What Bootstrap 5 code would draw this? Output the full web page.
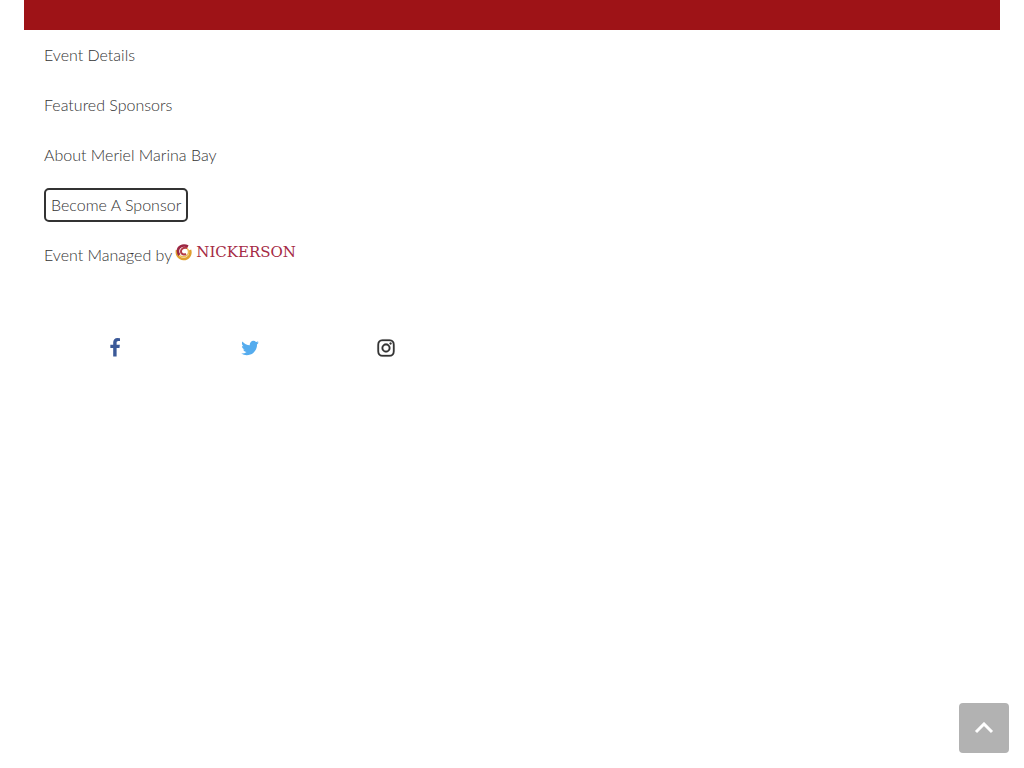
<!DOCTYPE html>
<html lang="en">
<head>
<meta charset="utf-8">
<meta name="viewport" content="width=device-width, initial-scale=1">
<title>Meriel Marina Bay Event</title>
<link href="https://cdn.jsdelivr.net/npm/bootstrap@5.3.0/dist/css/bootstrap.min.css" rel="stylesheet">
<style>
  body { font: 300 16px/20px Lato, sans-serif; color: #333; background: #fff; }
  .page-wrap { padding: 0 24px; }
  .banner { height: 30px; background: #9e1317; }
  .menu-row { height: 50px; padding: 0 20px; }
  .menu-row a, .social a { color: inherit; text-decoration: none; }
  .menu-row .sponsor-btn { border: 2px solid #333; border-radius: 5px; padding: 5px; }
  .brand-logo { gap: 4px; margin: 0 0 6px 3px; }
  .brand-logo span { font: 400 15px/18px "DejaVu Serif", serif; color: #a52a44; }
  .social { margin: 58px 0 0 23px; }
  .social svg { display: block; width: 20px; height: 20px; fill: currentColor; }
  .social .fb { color: #3b5998; }
  .social .tw { color: #55acee; }
  .to-top { right: 15px; bottom: 15px; width: 50px; height: 50px; border-radius: 4px; background: #b2b2b2; }
</style>
</head>
<body>
<div class="page-wrap">
  <header class="banner"></header>
  <nav aria-label="Event">
    <ul class="list-unstyled mb-0">
      <li class="menu-row d-flex align-items-center"><a href="#details">Event Details</a></li>
      <li class="menu-row d-flex align-items-center"><a href="#sponsors">Featured Sponsors</a></li>
      <li class="menu-row d-flex align-items-center"><a href="#about">About Meriel Marina Bay</a></li>
      <li class="menu-row d-flex align-items-center"><a class="sponsor-btn" href="#become">Become A Sponsor</a></li>
      <li class="menu-row d-flex align-items-center">Event Managed by
        <a class="brand-logo d-flex align-items-center" href="#nickerson">
          <svg width="17" height="17" viewBox="0 0 34 34" fill="none" aria-hidden="true">
            <path stroke="#dfa02f" stroke-width="5" d="M4 12C2 22 8 30 17 30c10 0 16-9 13-18"/>
            <path stroke="#edbd55" stroke-width="3" d="M9 23c9 6 19 0 18-8 0-3-1-5-4-7"/>
            <path stroke="#9b2743" stroke-width="5" d="M26 5C15 0 5 6 6 15c0 3 1 5 3 7"/>
            <path stroke="#b33b45" stroke-width="4" d="M24 8c-8-2-13 3-12 8 1 5 6 6 10 4"/>
          </svg>
          <span>NICKERSON</span>
        </a>
      </li>
    </ul>
  </nav>
  <ul class="social list-unstyled row g-0 col-5">
    <li class="col-4 d-flex justify-content-center"><a class="fb" href="#facebook" aria-label="Facebook"><svg viewBox="0 0 1792 1792"><path d="M1343 12v264h-157q-86 0-116 36t-30 108v189h293l-39 296h-254v759h-306v-759h-255v-296h255v-218q0-186 104-288.500t277-102.500q147 0 228 12z"/></svg></a></li>
    <li class="col-4 d-flex justify-content-center"><a class="tw" href="#twitter" aria-label="Twitter"><svg viewBox="0 0 1792 1792"><path d="M1684 408q-67 98-162 167 1 14 1 42 0 130-38 259.500t-115.500 248.500-184.500 210.500-258 146-323 54.500q-271 0-496-145 35 4 78 4 225 0 401-138-105-2-188-64.500t-114-159.500q33 5 61 5 43 0 85-11-112-23-185.500-111.500t-73.500-205.500v-4q68 38 146 41-66-44-105-115t-39-154q0-88 44-163 121 149 294.500 238.500t371.500 99.500q-8-38-8-74 0-134 94.500-228.500t228.500-94.500q140 0 236 102 109-21 205-78-37 115-142 178 93-10 186-50z"/></svg></a></li>
    <li class="col-4 d-flex justify-content-center"><a href="#instagram" aria-label="Instagram"><svg viewBox="0 0 1792 1792"><path stroke="currentColor" stroke-width="30" d="M1152 896q0-106-75-181t-181-75-181 75-75 181 75 181 181 75 181-75 75-181zm138 0q0 164-115 279t-279 115-279-115-115-279 115-279 279-115 279 115 115 279zm108-410q0 38-27 65t-65 27-65-27-27-65 27-65 65-27 65 27 27 65zm-502-220q-7 0-76.500-.5t-105.500 0-96.500 3-103 10-71.500 18.500q-50 20-88 58t-58 88q-11 29-18.500 71.500t-10 103-3 96.500 0 105.500.5 76.500-.5 76.500 0 105.500 3 96.500 10 103 18.500 71.500q20 50 58 88t88 58q29 11 71.500 18.500t103 10 96.500 3 105.500 0 76.500-.5 76.500.5 105.500 0 96.500-3 103-10 71.500-18.500q50-20 88-58t58-88q11-29 18.500-71.500t10-103 3-96.500 0-105.500-.5-76.500.5-76.500 0-105.500-3-96.500-10-103-18.500-71.500q-20-50-58-88t-88-58q-29-11-71.500-18.500t-103-10-96.500-3-105.500 0-76.500.5zm768 630q0 229-5 317-10 208-124 322t-322 124q-88 5-317 5t-317-5q-208-10-322-124t-124-322q-5-88-5-317t5-317q10-208 124-322t322-124q88-5 317-5t317 5q208 10 322 124t124 322q5 88 5 317z"/></svg></a></li>
  </ul>
</div>
<button type="button" class="to-top position-fixed border-0 p-0 d-flex align-items-center justify-content-center" aria-label="Back to top">
  <svg width="20" height="12" viewBox="0 0 20 12" fill="none" stroke="#fff" stroke-width="3"><path d="M2 10l8-8 8 8"/></svg>
</button>
<script src="https://cdn.jsdelivr.net/npm/bootstrap@5.3.0/dist/js/bootstrap.bundle.min.js"></script>
</body>
</html>
